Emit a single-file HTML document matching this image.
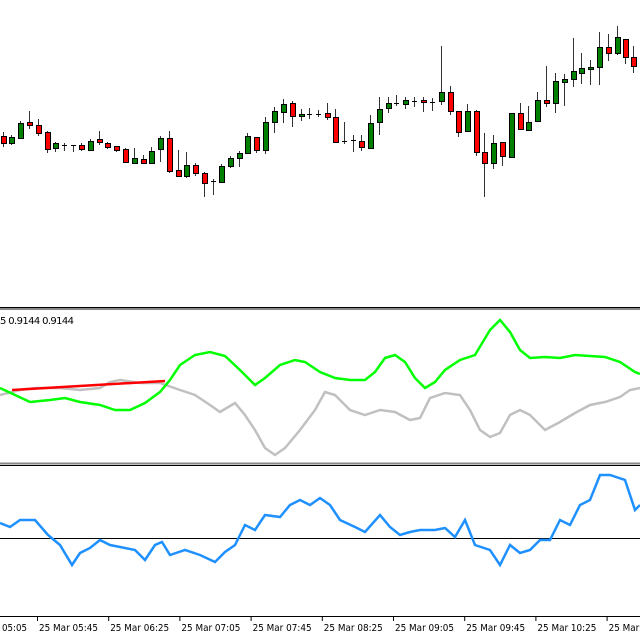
<!DOCTYPE html><html><head><style>body{margin:0;background:#fff;width:640px;height:640px;overflow:hidden;font-family:Tahoma,"DejaVu Sans","Liberation Sans",sans-serif}</style></head><body>
<svg width="640" height="640" xmlns="http://www.w3.org/2000/svg" style="position:absolute;left:0;top:0">
<rect width="640" height="640" fill="#fff"/>
<g id="c" stroke="#000" stroke-width="1" shape-rendering="crispEdges"></g>
<line x1="0" y1="307.5" x2="640" y2="307.5" stroke="#000"/><line x1="0" y1="309" x2="640" y2="309" stroke="#888" stroke-width="2"/>
<line x1="0" y1="463.5" x2="640" y2="463.5" stroke="#888" stroke-width="2"/><line x1="0" y1="465.5" x2="640" y2="465.5" stroke="#000"/>
<line x1="0" y1="538.5" x2="640" y2="538.5" stroke="#000"/>
<line x1="0" y1="616.5" x2="640" y2="616.5" stroke="#000"/>
<text x="0" y="324" font-size="10" fill="#000" textLength="74" font-family="Tahoma,DejaVu Sans,sans-serif">5 0.9144 0.9144</text>
<polyline fill="none" stroke="#c0c0c0" stroke-width="2.5" points="0,395 20,390 35,388 60,388 80,390 100,388 110,382 120,380 140,383 160,383 180,390 195,395 210,405 220,412 235,403 245,415 255,430 265,448 275,455 285,448 300,430 315,410 325,392 335,395 350,410 365,415 380,410 395,412 410,420 420,418 430,398 445,393 460,395 470,410 480,430 490,437 500,433 510,415 520,410 530,415 545,430 560,422 575,413 590,405 605,402 620,397 630,390 640,388"/>
<polyline fill="none" stroke="#ff0000" stroke-width="2.5" points="12,390 165,381"/>
<polyline fill="none" stroke="#00ff00" stroke-width="2.5" points="0,388 15,395 30,402 50,400 65,398 80,402 100,405 115,410 130,410 145,403 160,392 170,380 180,365 195,355 210,352 225,356 240,370 255,385 265,378 280,365 295,360 305,362 320,372 335,378 350,380 365,380 375,372 385,358 395,355 405,362 415,378 425,388 435,382 445,370 460,360 475,355 490,330 500,320 510,332 520,350 530,358 545,357 560,358 575,355 590,356 605,357 620,362 635,372 640,374"/>
<polyline fill="none" stroke="#1e90ff" stroke-width="2.5" points="0,523 10,527 20,520 35,520 48,535 60,545 72,565 80,553 90,548 100,540 110,545 125,548 135,550 145,560 155,545 162,542 170,555 185,550 200,555 215,562 225,552 235,545 245,525 255,530 265,515 280,517 290,505 300,500 310,505 320,498 330,505 340,520 355,527 365,532 380,515 390,527 400,535 410,532 420,530 435,530 445,528 455,537 465,520 475,545 490,550 500,565 510,545 520,553 530,550 540,540 550,540 560,520 570,525 580,505 590,500 600,475 610,475 625,480 635,510 640,505"/>
<g id="t" font-size="10" fill="#000"></g>
</svg>
<script>
var C=[[3,'r',136,143,132,147],[11,'g',143,137,135,145],[20,'g',138,123,121,139],[29,'r',122,125,111,129],[38,'r',125,133,119,136],[47,'r',132,149,131,153],[55,'g',148,143,142,152],[64,'d',145,145,143,151],[73,'d',145,145,145,152],[81,'r',145,149,143,151],[90,'g',150,141,139,151],[99,'r',139,142,131,145],[107,'r',143,147,142,149],[116,'r',146,150,146,152],[125,'r',149,162,148,163],[134,'g',163,158,148,163],[143,'r',159,163,155,164],[151,'g',163,151,147,164],[160,'g',149,138,136,162],[169,'r',138,171,131,173],[178,'r',170,176,150,177],[186,'g',176,165,152,178],[195,'r',165,173,163,176],[204,'r',173,183,172,197],[213,'d',181,181,179,195],[221,'g',182,166,164,183],[230,'g',166,158,156,168],[239,'g',158,153,151,167],[247,'g',153,136,133,154],[256,'r',137,150,137,153],[265,'g',150,122,117,154],[274,'g',122,111,107,133],[283,'g',112,104,99,123],[292,'r',103,116,101,127],[301,'g',116,114,109,121],[309,'d',114,114,108,119],[318,'d',114,114,110,117],[327,'r',113,117,103,120],[335,'r',117,142,109,143],[344,'d',141,141,122,144],[353,'d',140,140,135,152],[361,'r',141,147,135,151],[370,'g',148,123,115,148],[379,'g',122,109,97,135],[388,'g',108,103,97,113],[396,'d',103,103,95,106],[405,'g',104,100,97,109],[414,'d',101,101,97,107],[423,'r',100,102,97,112],[432,'d',102,102,98,111],[441,'g',101,92,46,105],[450,'r',92,111,86,115],[458,'r',111,132,111,137],[467,'g',131,111,104,132],[476,'r',111,152,110,156],[484,'r',152,163,133,197],[493,'g',163,143,135,169],[502,'r',142,156,142,166],[511,'g',157,113,113,158],[520,'r',113,129,103,130],[528,'g',130,122,106,130],[537,'g',121,100,92,122],[546,'r',100,103,66,107],[555,'g',103,81,73,113],[564,'g',82,79,74,106],[573,'g',79,71,38,87],[581,'g',73,68,53,84],[590,'g',69,67,60,85],[599,'g',67,47,32,85],[608,'r',47,53,34,61],[617,'g',53,37,26,55],[625,'r',39,57,39,64],[633,'r',57,66,46,73]];
var s='';
C.forEach(function(c){var x=c[0],t=Math.min(c[2],c[3]),b=Math.max(c[2],c[3]);
s+='<line x1="'+(x+.5)+'" y1="'+c[4]+'" x2="'+(x+.5)+'" y2="'+c[5]+'" stroke="#333"/>';
if(c[1]=='d'){s+='<line x1="'+(x-2)+'" y1="'+(t+.5)+'" x2="'+(x+3)+'" y2="'+(t+.5)+'"/>';}
else s+='<rect x="'+(x-2+.5)+'" y="'+(t+.5)+'" width="5" height="'+Math.max(2,b-t)+'" fill="'+(c[1]=='g'?'#008000':'#ff0000')+'"/>';});
document.getElementById('c').innerHTML=s;
var L=['05:05','25 Mar 05:45','25 Mar 06:25','25 Mar 07:05','25 Mar 07:45','25 Mar 08:25','25 Mar 09:05','25 Mar 09:45','25 Mar 10:25','25 Mar 11:05'],u='';
L.forEach(function(l,i){var x=i==0?2:37+(i-1)*71.2;if(i>0)u+='<line x1="'+(x+.5)+'" y1="617" x2="'+(x+.5)+'" y2="621" stroke="#000"/>';u+='<text x="'+(i==0?2:x+2)+'" y="631" textLength="'+(i==0?25:59)+'" lengthAdjust="spacingAndGlyphs">'+l+'</text>';});
document.getElementById('t').innerHTML=u;
</script>
</body></html>
